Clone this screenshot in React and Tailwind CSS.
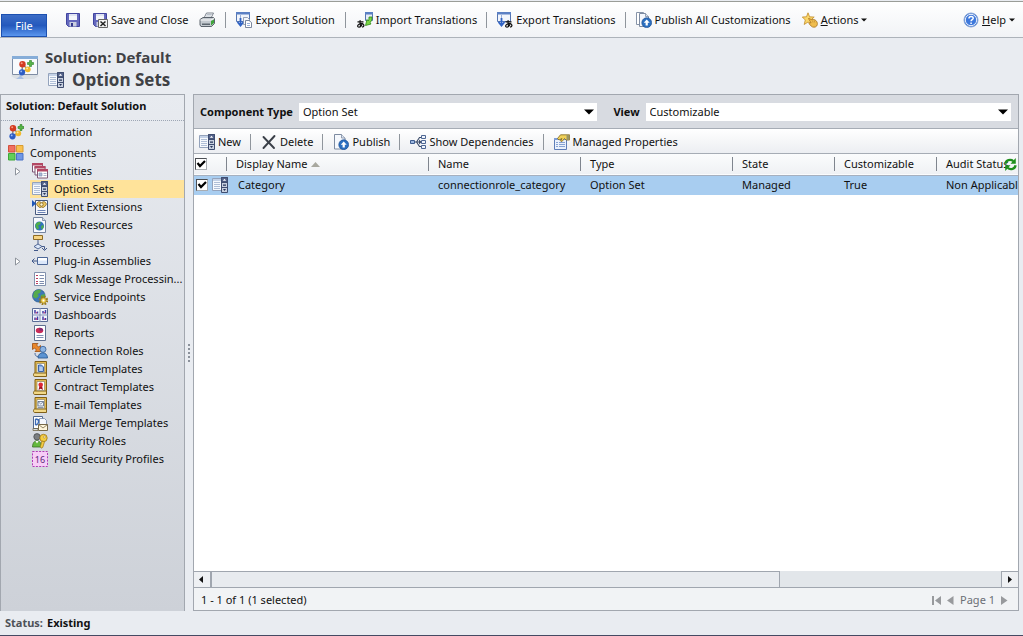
import React from "react";

function Svg({ children, size = 16, className = "" }) {
  return (
    <svg width={size} height={size} viewBox="0 0 16 16" className={"shrink-0 " + className} aria-hidden="true">
      {children}
    </svg>
  );
}

const Floppy = () => (
  <>
    <path d="M1.5 1.5h13v13h-11l-2-2z" fill="#6468bd" stroke="#4145a0" />
    <path d="M4 2h8v6H4z" fill="#f4f6fb" />
    <path d="M4 2h8v2H4z" fill="#dfe4f2" />
    <path d="M4.500 10h7v4.500h-7z" fill="#c9cee0" />
    <path d="M6 11h2v3.500H6z" fill="#33388c" />
  </>
);
const SaveIcon = () => <Svg><Floppy /></Svg>;
const SaveCloseIcon = () => (
  <Svg>
    <Floppy />
    <path d="M6.500 7.500h9v8h-9z" fill="#f3f3f3" stroke="#666" />
    <path d="M8.500 9.500l5 4.500m0-4.500l-5 4.500" stroke="#222" strokeWidth="1.500" />
  </Svg>
);
const PrintIcon = () => (
  <Svg>
    <path d="M5 6l2.500-5h7L12 6z" fill="#fff" stroke="#6b7480" strokeWidth=".9" />
    <path d="M7 4h5M7.800 2.500h5" stroke="#9aa6b5" strokeWidth=".7" />
    <path d="M1 7.500L4 5.500h10.500l1 1.500v4.500l-3 3H2l-1-1.500z" fill="#c3c9cf" stroke="#4d565f" strokeWidth=".9" />
    <path d="M1.500 8h10.500l3-1.500" stroke="#fff" strokeWidth=".9" fill="none" />
    <path d="M3 11.500h8v1.500H3z" fill="#5d666f" />
    <path d="M12 9l3-1.500v3.500L12 13.500z" fill="#3fa43a" />
  </Svg>
);
const WindowShape = () => (
  <>
    <path d="M.5 .5h13v9H.5z" fill="#f1f5fc" stroke="#5575b0" />
    <path d="M0 0h14v2.500H0z" fill="#5b80c4" />
    <path d="M4.500 3v6.500" stroke="#9bb0d8" />
  </>
);
const ExportSolutionIcon = () => (
  <Svg>
    <WindowShape />
    <path d="M4.500 6v6m-3-2l3 3.500 3-3.500" stroke="#2f62c4" strokeWidth="1.800" fill="none" />
    <path d="M7.500 5.500h4l2 2v5h-6z" fill="#f4f7fc" stroke="#7f8da6" strokeWidth=".8" />
    <path d="M9.500 8.500h3.500l2.500 2v5h-6z" fill="#fff" stroke="#5c6b85" strokeWidth=".8" />
    <path d="M11 11.500h3M11 13.500h3" stroke="#7d9bd0" strokeWidth=".8" />
  </Svg>
);
const Kana = ({ x, y }) => (
  <g transform={`translate(${x} ${y})`} fill="none" stroke="#111" strokeWidth="1.200">
    <path d="M1 1.800h6M3.700 .2c-.4 2.500-.2 4.500.7 6.800M6 3c-.8 2.600-2.600 4.400-4.200 4-1.600-.6-.2-3.400 3-3.500C8 3.700 8.300 6.300 5.600 7.300" />
  </g>
);
const ImportTransIcon = () => (
  <Svg>
    <path d="M8.500 .500h7v8h-7z" fill="#e5ecf8" stroke="#5575b0" />
    <path d="M8 0h8v2.500H8z" fill="#5b80c4" />
    <path d="M15 5c0 3-.5 4.500-2 5.500l1 1.500-5.500 1.500 1.500-6 1.200 1.500C12 8 12 6.500 12 5z" fill="#7bd544" stroke="#2f8a17" strokeWidth=".8" />
    <Kana x={-0.5} y={8} />
  </Svg>
);
const ExportTransIcon = () => (
  <Svg>
    <WindowShape />
    <path d="M4.500 6v6m-3-2l3 3.500 3-3.500" stroke="#2f62c4" strokeWidth="1.800" fill="none" />
    <Kana x={7.500} y={8} />
  </Svg>
);
const PublishIcon = ({ double }) => (
  <Svg>
    {double && <path d="M.5 .5h7v12h-7z" fill="#fff" stroke="#8794a8" />}
    <path d={double ? "M3.500 1.500h6l3 3v10h-9z" : "M1.500 .5h7l3.500 3.500v11H1.500z"} fill="#f5f8fd" stroke="#7d8ba1" />
    <path d={double ? "M9.500 1.500v3h3" : "M8.500 .5v3.500h3.500"} fill="#dce4f0" stroke="#7d8ba1" strokeWidth=".8" />
    <circle cx="10.700" cy="10.700" r="4.900" fill="#2b6fc0" stroke="#1c4f94" strokeWidth=".7" />
    <path d="M10.700 7.500l3 3.300h-1.900v2.700H9.600v-2.700H7.700z" fill="#fff" />
  </Svg>
);
const ActionsIcon = () => (
  <Svg>
    <path d="M6 .8l1.600 4 4.600.3L8.800 8l1.200 4.500L6 10l-3.800 2.500L3.300 8 .3 5l4.200-.2z" fill="#fbd76b" stroke="#c08c28" strokeWidth=".8" />
    <path d="M6.500 6.500c1-.7 2 .6 3 1.600l.5-.9 1.300.3.800.1 1 .4 1 .7c1.500 1.600 1.700 3.700.6 5.300-1.200 1.600-4.300 1.600-5.500.1L7.300 12c-.6-1 .2-1.500 1-1.200l.8.200z" fill="#efbd4e" stroke="#a97420" strokeWidth=".8" />
    <path d="M10.500 8.500l.5 2M12.300 8.500l.4 2" stroke="#b98630" strokeWidth=".6" />
  </Svg>
);
const HelpIcon = () => (
  <Svg>
    <circle cx="8" cy="8" r="7" fill="#2f6bd0" stroke="#8ba7d6" />
    <circle cx="8" cy="8" r="5.700" fill="#3d78dc" stroke="#fff" strokeWidth=".9" />
    <path d="M6 6.500c0-2.600 4.200-2.600 4.200-.3 0 1.500-2.100 1.500-2.100 3.100M8.100 10.600v1.300" stroke="#fff" strokeWidth="1.500" fill="none" />
  </Svg>
);
const OptionIcon = () => (
  <Svg>
    <path d="M.5 1.500h9v12h-9z" fill="#f6f9fd" stroke="#94a3bc" />
    <path d="M1 2h8.500v2H1z" fill="#c4d2e8" />
    <path d="M2 5.500h6M2 7.500h6M2 9.500h6M2 11.500h6" stroke="#a7b7d2" strokeWidth=".9" />
    <path d="M9.500 .5h6v15h-6z" fill="#c8d0df" stroke="#3f4d70" />
    <path d="M9.500 .5h6v4.500h-6z" fill="#53628a" stroke="#3f4d70" />
    <path d="M10.800 3.800l1.700-2 1.700 2z" fill="#fff" />
    <path d="M9.500 5.500h6M9.500 10.500h6" stroke="#3f4d70" />
    <path d="M11 7.500h3v1.200h-3zM11 12h3l-1.500 2z" fill="#26345a" />
  </Svg>
);
const Balls = () => (
  <>
    <path d="M5 4.500l5 4.500M5 5l-.5 7M10 9l-5 3" stroke="#8a8a8a" strokeWidth="1.500" />
    <circle cx="5" cy="4.200" r="3.200" fill="#d43a21" /><circle cx="4.200" cy="3.200" r="1" fill="#f59a85" />
    <circle cx="10.300" cy="9.300" r="2.900" fill="#f3b92c" /><circle cx="9.600" cy="8.400" r=".9" fill="#fde9ad" />
    <circle cx="4.500" cy="12.300" r="3.100" fill="#2d5dc4" /><circle cx="3.700" cy="11.400" r=".9" fill="#9fbcf2" />
    <path d="M12 .5h2v2h2v2h-2v2h-2v-2h-2v-2h2z" fill="#57b549" stroke="#2d7f26" strokeWidth=".6" />
  </>
);
const InfoIcon = () => <Svg><Balls /></Svg>;
const ComponentsIcon = () => (
  <Svg>
    <path d="M.5 .5h6.500v6.500H.5z" fill="#f2705f" stroke="#d2503f" />
    <path d="M8.500 .5h6.500v6.500H8.500z" fill="#f9c14f" stroke="#d99c2f" />
    <path d="M.5 8.500h6.500v6.500H.5z" fill="#63cf5a" stroke="#3da838" />
    <path d="M8.500 8.500h6.500v6.500H8.500z" fill="#6f97e6" stroke="#4a72c6" />
  </Svg>
);
const EntitiesIcon = () => (
  <Svg>
    {[[0, 0], [2.500, 3], [5, 6]].map(([x, y]) => (
      <g key={x} transform={`translate(${x} ${y})`}>
        <path d="M.5 .5h10v8.500H.5z" fill="#fff" stroke="#7c5775" />
        <path d="M0 0h11v2.500H0z" fill="#b34763" />
      </g>
    ))}
    <path d="M7 10h3v3H7zM11.500 10.500h3M11.500 12.500h3" fill="#a9b8d6" stroke="#8595b8" strokeWidth=".7" />
  </Svg>
);
const ClientExtIcon = () => (
  <Svg>
    <path d="M3.500 1.500h12v14h-12z" fill="#f6f7fb" stroke="#46597e" />
    <path d="M0 1l4 3.500L0 8z" fill="#1f57b8" />
    <path d="M5.500 3.500c1.500-1.500 3-.7 4 .5 1-1.200 2.500-2 4-.5s.7 3-.5 3.500c-1 1.500-2 2-3.500 1C8 9 7 8.500 6 7c-1.200-.5-2-2-.5-3.500z" fill="#ecc65f" stroke="#80601a" strokeWidth=".8" />
    <circle cx="9.500" cy="5.500" r="1.700" fill="#fff4ce" stroke="#80601a" strokeWidth=".8" />
    <path d="M5.500 11.500h8M5.500 13.500h8" stroke="#6b83b5" />
  </Svg>
);
const WebIcon = () => (
  <Svg>
    <path d="M1.500 .5h9l3 3v12h-12z" fill="#f7f9fd" stroke="#7484a0" />
    <path d="M10.500 .5v3h3" fill="#d7e0ef" stroke="#7484a0" strokeWidth=".8" />
    <circle cx="7.500" cy="9" r="4.500" fill="#2f72bd" />
    <path d="M4 6.500c1.500-1.600 4-2 5-1l-1 2-2 1 1 2-1 2.300c-2-1-3.200-3.800-2-6.300zM9 9l2.500-1c.5 2-.3 3.500-1.800 4.500z" fill="#4fae4a" />
  </Svg>
);
const ProcessIcon = () => (
  <Svg>
    <path d="M1.500 .5h9v4h-9z" fill="#f6d483" stroke="#8d6a24" />
    <path d="M6 5v4" stroke="#485e8d" />
    <path d="M2 11.500l4-2.500 4 2.500L6 14z" fill="#dae6f8" stroke="#42598a" strokeWidth=".9" />
    <path d="M10 11.500h2.500v3M2 15.500h4M10 13l2.500 2.500L15 13" stroke="#42598a" fill="none" />
  </Svg>
);
const PluginIcon = () => (
  <Svg>
    <path d="M0 8h5M2.500 5.500L0 8l2.500 2.500" stroke="#3e5789" fill="none" />
    <path d="M5.500 4.500h10v7h-10z" fill="#dbe7fa" stroke="#4c6797" />
    <path d="M6 5h9v2.500H6z" fill="#fff" />
  </Svg>
);
const SdkIcon = () => (
  <Svg>
    <path d="M2.500 1.500h11v13h-11z" fill="#fff" stroke="#8291ad" />
    <path d="M4 4.500h2M4 7.500h2M4 10.500h2M4 12.500h2" stroke="#bd3a5c" />
    <path d="M7.500 4.500h4.500M7.500 7.500h4.500M7.500 10.500h4.500M7.500 12.500h4.500" stroke="#7d8cae" />
  </Svg>
);
const GearShape = ({ x, y }) => (
  <g transform={`translate(${x} ${y})`}>
    <circle r="3.200" fill="none" stroke="#9c7b1b" strokeWidth="3" strokeDasharray="1.500 1" />
    <circle r="2.700" fill="#f2d253" stroke="#9c7b1b" strokeWidth=".7" />
    <circle r="1" fill="#fff" />
  </g>
);
const EndpointIcon = () => (
  <Svg>
    <circle cx="6.800" cy="6.800" r="6.300" fill="#3c78b8" stroke="#28568a" strokeWidth=".7" />
    <path d="M2 3c2-2 5-2.600 7-1.800L8 4 5.500 5l1.300 2L4 9.500 1 8zM9 6l4-1c.5 3-1 5-3 6.500L8.500 9z" fill="#55ab4b" />
    <GearShape x={11.500} y={11.500} />
  </Svg>
);
const DashIcon = () => (
  <Svg>
    <path d="M.5 1.500h15v13H.5z" fill="#f3f6fc" stroke="#596c96" />
    <path d="M0 8h16M8 1v14" stroke="#8391b5" />
    <path d="M3 6.500V3M5.500 6.500v-2M11 6.500V4M13.500 6.500V3M3 13v-2.500M5.500 13V9.500M11 13V9.500M13.500 13v-2" stroke="#433fa5" strokeWidth="1.500" />
    <path d="M4.300 6.500V5M12.300 6.500V5M4.300 13v-2M12.300 13v-1.500" stroke="#c4316d" />
  </Svg>
);
const ReportIcon = () => (
  <Svg>
    <path d="M2.500 .5h11v15h-11z" fill="#fff" stroke="#5e708f" />
    <ellipse cx="7.500" cy="5.500" rx="3.700" ry="2.700" fill="#c92c58" />
    <path d="M7.500 5.500V2.800c2 0 3.700 1 3.700 2.700z" fill="#7d2b74" />
    <path d="M4.500 10.500h7M4.500 12.500h7" stroke="#8092b4" />
  </Svg>
);
const ConnectionIcon = () => (
  <Svg>
    <path d="M.5 .5h5.500L4.500 2l2 2L8.500 2.500v6H3L4.500 7l-2-2L.5 6.500z" fill="#e9872b" stroke="#9c4d10" strokeWidth=".8" />
    <circle cx="11" cy="6.300" r="3" fill="#8db5e4" stroke="#3d689e" strokeWidth=".9" />
    <path d="M6 15c0-7 9.500-7 9.500 0z" fill="#5b93d2" stroke="#2e5d96" strokeWidth=".9" />
    <path d="M3 10c0 2.500 1 3.500 3 3.500" stroke="#4b6da0" fill="none" />
  </Svg>
);
const Template = ({ children }) => (
  <Svg>
    <path d="M3 .5h11.500v13H3z" fill="#e1b84d" stroke="#806018" />
    <path d="M1.500 13.500c0-1.500 1-1.500 2-1.500h11v3.500h-12c-.6 0-1-.8-1-2z" fill="#f2d887" stroke="#806018" />
    <path d="M5 2.500h7.500v9H5z" fill="#fff" stroke="#8b8468" strokeWidth=".7" />
    {children}
  </Svg>
);
const ArticleIcon = () => <Template><path d="M6.500 4h3l2 2v4.500h-5z" fill="#86ace3" stroke="#2e579c" strokeWidth=".9" /><path d="M7.500 7h3M7.500 9h3" stroke="#fff" strokeWidth=".8" /></Template>;
const ContractIcon = () => <Template><path d="M7.500 7l-1 4 2.200-1.300L11 11l-1-4z" fill="#a3121f" /><circle cx="8.700" cy="5.800" r="2.300" fill="#dd2834" /></Template>;
const EmailIcon = () => <Template><path d="M6 4.500h5.500v4.500H6z" fill="#eef2f9" stroke="#596984" strokeWidth=".8" /><path d="M6 4.500l2.700 2.500 2.800-2.500M6 10.500h5.500" stroke="#596984" strokeWidth=".7" fill="none" /></Template>;
const MergeIcon = () => (
  <Svg>
    <path d="M1.500 1.500h9v12h-9z" fill="#fff" stroke="#51688f" />
    <path d="M3.500 4v6m0-6c4 0 4 5 0 6M7 4v3" stroke="#3c6ab6" fill="none" strokeWidth="1.300" />
    <path d="M7.500 3.500h5l2 2v7h-7z" fill="#f5f8fd" stroke="#7184a5" strokeWidth=".8" />
    <path d="M6.500 9.500h9v6h-9z" fill="#fff6dc" stroke="#76694a" />
    <path d="M6.500 9.500l4.500 3.500 4.500-3.500M1 13.500h5v2H1z" fill="none" stroke="#76694a" strokeWidth=".8" />
  </Svg>
);
const SecurityIcon = () => (
  <Svg>
    <circle cx="5" cy="3.800" r="3.200" fill="#7a7d80" stroke="#4b4e50" strokeWidth=".8" />
    <path d="M.5 14c0-8.500 9-8.500 9 0z" fill="#63b93d" stroke="#396e25" strokeWidth=".8" />
    <path d="M3.500 8L5 10.500 6.500 8z" fill="#fff" />
    <circle cx="11.500" cy="5" r="3.700" fill="#f4cd43" stroke="#9b7414" strokeWidth=".8" />
    <circle cx="12.300" cy="4" r="1" fill="#fff" stroke="#9b7414" strokeWidth=".5" />
    <path d="M10 8l2.500 .7-1.700 5.600-1.500.9-1-1.500z" fill="#f4cd43" stroke="#9b7414" strokeWidth=".7" />
  </Svg>
);
const FieldIcon = () => (
  <Svg>
    <path d="M.5 .5h15v15H.5z" fill="#f7cdf7" stroke="#b03ab5" strokeDasharray="2 1.300" />
    <text x="8" y="11.500" textAnchor="middle" fontSize="9" fontFamily="Noto Sans" fill="#5c2a78">16</text>
  </Svg>
);
const DeleteIcon = () => (
  <Svg>
    <path d="M2.500 3l10.500 11M13.500 2L2.500 14" stroke="#3a3f48" strokeWidth="1.900" strokeLinecap="round" />
  </Svg>
);
const DependIcon = () => (
  <Svg>
    <path d="M.5 6.500h4v3h-4z" fill="#9db8e0" stroke="#3f5d90" />
    <path d="M5 8h6M6.500 8l3-4.500H11M6.500 8l3 4.500H11" stroke="#3c4c6a" fill="none" strokeWidth="1.100" />
    <path d="M11.500 1.500h4v3h-4zM11.500 6.500h4v3h-4zM11.500 11.500h4v3h-4z" fill="#eff4fc" stroke="#4e6794" />
    <path d="M9 5.500L11.500 8 9 10.500z" fill="#3c4c6a" />
  </Svg>
);
const ManagedIcon = () => (
  <Svg>
    <path d="M.5 4.500h12v11H.5z" fill="#eaf1fc" stroke="#5d7db8" />
    <path d="M0 4h13v2H0z" fill="#7d9cd6" />
    <path d="M2 8.500h2M5 8.500h6M2 10.500h2M5 10.500h6M2 12.500h2M5 12.500h6" stroke="#7c9ace" strokeWidth=".9" />
    <path d="M3.500 4.500l3-3.700h9v5.200H12l-1.500-1.500L8 7.500 6.500 7 8 4.500 5 6z" fill="#f0d159" stroke="#80651b" strokeWidth=".8" />
    <path d="M12.500 1h3v5h-3z" fill="#9a9462" />
  </Svg>
);
const RefreshIcon = () => (
  <Svg size={13}>
    <path d="M2 7C2 2.500 8 1 11.500 3.800M14 9c0 4.500-6 6-9.500 3.200" stroke="#1f8f1d" strokeWidth="3" fill="none" />
    <path d="M14.500 0v7H8zM1.500 16V9H8z" fill="#1f8f1d" />
  </Svg>
);
const SolutionIcon = () => (
  <svg width="28" height="28" viewBox="0 0 28 28" className="shrink-0" aria-hidden="true">
    <path d="M0 22l5-4h18l5 4-5 3H5z" fill="#dadfe4" />
    <path d="M1.500 2.500h25v18h-25z" fill="#f8fafd" stroke="#7e8ca3" />
    <path d="M1 2h26v3H1z" fill="#86add8" />
    <path d="M8.500 19v3.500L5 25h8l-2.500-2.500V19z" fill="#a9bfe2" />
    <g transform="translate(6.500 6)"><Balls /></g>
  </svg>
);
const Caret = () => (
  <svg width="6" height="4" viewBox="0 0 6 4" className="shrink-0" aria-hidden="true"><path d="M0 .5h6L3 3.500z" fill="#111" /></svg>
);

const Separator = ({ className = "" }) => <span className={"w-px shrink-0 bg-[#8f959c] " + className} />;

function BarButton({ icon, children, label, className = "" }) {
  return (
    <button type="button" aria-label={label} className={"flex shrink-0 items-center gap-[3px] whitespace-nowrap " + className}>
      {icon}
      {children}
    </button>
  );
}

function Ribbon() {
  return (
    <header className="flex h-[37px] shrink-0 border-t border-b border-t-[#9a9d98] border-b-[#adb3ba] bg-linear-to-b from-white to-[#f1f3f6] pr-2 pl-px">
      <button type="button" className="mt-3 w-[46px] shrink-0 border border-[#1c50b0] bg-linear-to-b from-[#3c6dc6] via-[#2459bd] to-[#5a96ee] text-white">
        File
      </button>
      <div className="flex h-9 grow items-center">
        <BarButton className="ml-[18px]" icon={<SaveIcon />} label="Save" />
        <BarButton className="ml-[11px]" icon={<SaveCloseIcon />}>Save and Close</BarButton>
        <BarButton className="ml-[11px]" icon={<PrintIcon />} label="Print" />
        <Separator className="ml-[10px] h-4" />
        <BarButton className="ml-[10px]" icon={<ExportSolutionIcon />}>Export Solution</BarButton>
        <Separator className="ml-[10px] h-4" />
        <BarButton className="ml-[11px]" icon={<ImportTransIcon />}>Import Translations</BarButton>
        <Separator className="ml-[9px] h-4" />
        <BarButton className="ml-[10px]" icon={<ExportTransIcon />}>Export Translations</BarButton>
        <Separator className="ml-[9px] h-4" />
        <BarButton className="ml-[10px]" icon={<PublishIcon double />}>Publish All Customizations</BarButton>
        <BarButton className="ml-[11px]" icon={<ActionsIcon />}>
          <span><u>A</u>ctions</span><Caret />
        </BarButton>
        <BarButton className="ml-auto" icon={<HelpIcon />}>
          <span><u>H</u>elp</span><Caret />
        </BarButton>
      </div>
    </header>
  );
}

const tree = [
  ["Entities", EntitiesIcon, true],
  ["Option Sets", OptionIcon],
  ["Client Extensions", ClientExtIcon],
  ["Web Resources", WebIcon],
  ["Processes", ProcessIcon],
  ["Plug-in Assemblies", PluginIcon, true],
  ["Sdk Message Processin...", SdkIcon],
  ["Service Endpoints", EndpointIcon],
  ["Dashboards", DashIcon],
  ["Reports", ReportIcon],
  ["Connection Roles", ConnectionIcon],
  ["Article Templates", ArticleIcon],
  ["Contract Templates", ContractIcon],
  ["E-mail Templates", EmailIcon],
  ["Mail Merge Templates", MergeIcon],
  ["Security Roles", SecurityIcon],
  ["Field Security Profiles", FieldIcon],
];

function Sidebar() {
  return (
    <nav className="w-[185px] shrink-0 overflow-hidden border border-b-0 border-[#a2a7af] bg-linear-to-b from-[#e8ebf0] to-[#cdd1d8]">
      <h2 className="flex h-[26px] items-center border-b border-dotted border-[#9da6b4] pb-[3px] pl-[5px] font-bold">Solution: Default Solution</h2>
      <a href="#information" className="flex h-[22px] items-center gap-[6px] pl-[7px]"><InfoIcon />Information</a>
      <a href="#components" className="flex h-[19px] items-center gap-[6px] pl-[7px]"><ComponentsIcon />Components</a>
      <ul>
        {tree.map(([name, Icon, expandable]) => (
          <li key={name} className="flex h-[18px] items-stretch">
            <span className="flex w-[29px] shrink-0 items-center pl-[14px]">
              {expandable && (
                <svg width="6" height="9" viewBox="0 0 6 9" aria-hidden="true"><path d="M.5 1v7L5 4.500z" fill="#fff" stroke="#8e949c" /></svg>
              )}
            </span>
            <a
              href={"#" + name.replaceAll(" ", "-").toLowerCase()}
              className={"flex grow items-center gap-[6px] pl-[2px] whitespace-nowrap " + (name === "Option Sets" ? "bg-[#ffe39a]" : "")}
            >
              <Icon />
              {name}
            </a>
          </li>
        ))}
      </ul>
    </nav>
  );
}

function Picker({ id, label, value, className }) {
  return (
    <div className={"flex items-center gap-[6px] " + className}>
      <label htmlFor={id} className="shrink-0 font-bold">{label}</label>
      <div className="grid grow items-center">
        <select id={id} className="col-start-1 row-start-1 h-[18px] w-full appearance-none bg-white px-1">
          <option>{value}</option>
        </select>
        <svg width="10" height="6" viewBox="0 0 10 6" className="pointer-events-none col-start-1 row-start-1 mr-[3px] justify-self-end" aria-hidden="true">
          <path d="M0 .5h10L5 5.500z" fill="#000" />
        </svg>
      </div>
    </div>
  );
}

function Tick({ label }) {
  return (
    <span className="grid size-3 shrink-0">
      <input type="checkbox" defaultChecked aria-label={label} className="peer col-start-1 row-start-1 size-3 appearance-none border border-[#a9adb2] border-t-[#4c4f54] border-l-[#4c4f54] bg-white" />
      <svg viewBox="0 0 12 12" className="pointer-events-none invisible col-start-1 row-start-1 size-3 peer-checked:visible" aria-hidden="true">
        <path d="M2.500 5l2.500 3 5-5" stroke="#000" strokeWidth="2.200" fill="none" />
      </svg>
    </span>
  );
}

const columns = ["Display Name", "Name", "Type", "State", "Customizable", "Audit Status"];
const record = ["Category", "connectionrole_category", "Option Set", "Managed", "True", "Non Applicable"];

function Grid() {
  return (
    <div className="relative grow overflow-hidden bg-white">
      <table className="w-full table-fixed border-collapse text-left">
        <colgroup>
          <col className="w-8" />
          <col className="w-[202px]" />
          <col className="w-[152px]" />
          <col className="w-[152px]" />
          <col className="w-[102px]" />
          <col className="w-[102px]" />
          <col />
        </colgroup>
        <thead>
          <tr className="h-[21px] border-b border-[#a6b0bf] bg-linear-to-b from-[#fbfcfd] to-[#eff1f4]">
            <th className="p-0 pl-px"><Tick label="Select all" /></th>
            {columns.map((c) => (
              <th key={c} className="overflow-hidden p-0 font-normal whitespace-nowrap">
                <span className="flex h-[14px] items-center gap-1 border-l border-[#7f858e] pl-[9px]">
                  {c}
                  {c === "Display Name" && (
                    <svg width="9" height="5" viewBox="0 0 9 5" aria-hidden="true"><path d="M0 5h9L4.500 0z" fill="#a8a89f" /></svg>
                  )}
                </span>
              </th>
            ))}
          </tr>
        </thead>
        <tbody>
          <tr className="h-5 bg-[#a8cdf0]">
            <td className="p-0 pl-[2px]">
              <span className="flex w-8 items-center gap-1"><Tick label="Select Category" /><OptionIcon /></span>
            </td>
            {record.map((c, i) => (
              <td key={c} className={"overflow-hidden p-0 whitespace-nowrap " + (i === 0 ? "pl-3" : "pl-[10px]")}>{c}</td>
            ))}
          </tr>
        </tbody>
      </table>
      <button type="button" aria-label="Refresh" className="absolute top-1 right-px"><RefreshIcon /></button>
    </div>
  );
}

function ScrollBar() {
  return (
    <div className="flex h-[17px] shrink-0 bg-[#e2e6ea]">
      <button type="button" aria-label="Scroll left" className="flex w-[17px] items-center justify-center border border-l-0 border-[#a0a6af] bg-[#eef0f3] pr-[2px]">
        <svg width="4" height="7" viewBox="0 0 4 7"><path d="M4 0v7L0 3.500z" fill="#111" /></svg>
      </button>
      <div className="flex grow border-b border-[#a0a6af]">
        <div className="w-[72%] border border-b-0 border-[#a0a6af] bg-[#e8ebef]" />
      </div>
      <button type="button" aria-label="Scroll right" className="flex w-[17px] items-center justify-center border border-r-0 border-[#a0a6af] bg-[#eef0f3]">
        <svg width="4" height="7" viewBox="0 0 4 7"><path d="M0 0v7l4-3.500z" fill="#111" /></svg>
      </button>
    </div>
  );
}

function Main() {
  return (
    <main className="mr-1 flex min-w-0 grow flex-col border border-[#a2a7af] bg-[#d8dbe1]">
      <div className="flex h-[33px] shrink-0 items-center pr-[7px] pl-[6px]">
        <Picker id="component-type" label="Component Type" value="Option Set" className="w-[49%]" />
        <Picker id="view" label="View" value="Customizable" className="ml-4 grow" />
      </div>
      <div className="flex h-[26px] shrink-0 items-center border-y border-[#a6acb5] bg-linear-to-b from-white to-[#eceef2] pt-px pl-[5px]">
        <BarButton icon={<OptionIcon />}>New</BarButton>
        <Separator className="ml-[9px] h-4" />
        <BarButton className="ml-[10px]" icon={<DeleteIcon />}>Delete</BarButton>
        <Separator className="ml-[9px] h-4" />
        <BarButton className="ml-[10px]" icon={<PublishIcon />}>Publish</BarButton>
        <Separator className="ml-[9px] h-4" />
        <BarButton className="ml-[10px]" icon={<DependIcon />}>Show Dependencies</BarButton>
        <Separator className="ml-[9px] h-4" />
        <BarButton className="ml-[10px]" icon={<ManagedIcon />}>Managed Properties</BarButton>
      </div>
      <Grid />
      <ScrollBar />
      <footer className="flex h-[22px] shrink-0 items-center bg-[#f1f3f5] pt-[2px] pr-[10px] pl-[7px]">
        <span className="grow">1 - 1 of 1 (1 selected)</span>
        <div className="flex items-center gap-[6px] text-[#6b6f76]">
          <button type="button" aria-label="First page"><svg width="9" height="9" viewBox="0 0 9 9" className="block"><path d="M0 0h2v9H0zM9 0v9L3 4.500z" fill="#989a9d" /></svg></button>
          <button type="button" aria-label="Previous page"><svg width="7" height="9" viewBox="0 0 7 9" className="block"><path d="M6.500 0v9L0 4.500z" fill="#989a9d" /></svg></button>
          <span>Page 1</span>
          <button type="button" aria-label="Next page"><svg width="7" height="9" viewBox="0 0 7 9" className="block"><path d="M0 0v9l6.500-4.500z" fill="#989a9d" /></svg></button>
        </div>
      </footer>
    </main>
  );
}

export default function App() {
  return (
    <div className="flex min-h-screen flex-col border-b border-[#454a63] bg-[#e9ecf1] pt-px font-['Noto_Sans',sans-serif] text-[11px] leading-[14px] text-[#111]">
      <Ribbon />
      <div className="flex h-14 shrink-0 items-center gap-[6px] pt-1 pl-[11px] text-[#3f4145]">
        <SolutionIcon />
        <div className="pt-px font-['Open_Sans','Noto_Sans',sans-serif] font-bold">
          <p className="text-[15px] leading-[22px]">Solution: Default</p>
          <h1 className="flex items-center gap-2 pl-[3px] text-[17px] leading-6"><OptionIcon />Option Sets</h1>
        </div>
      </div>
      <div className="flex grow">
        <Sidebar />
        <div className="flex w-2 shrink-0 flex-col items-center justify-center gap-[2px]">
          {[0, 1, 2, 3, 4].map((n) => <span key={n} className="size-[2px] bg-[#8b919b]" />)}
        </div>
        <Main />
      </div>
      <div className="flex h-6 shrink-0 items-center gap-1 pl-[5px] font-bold">
        <span className="text-[#4e5258]">Status:</span>
        <span>Existing</span>
      </div>
    </div>
  );
}
